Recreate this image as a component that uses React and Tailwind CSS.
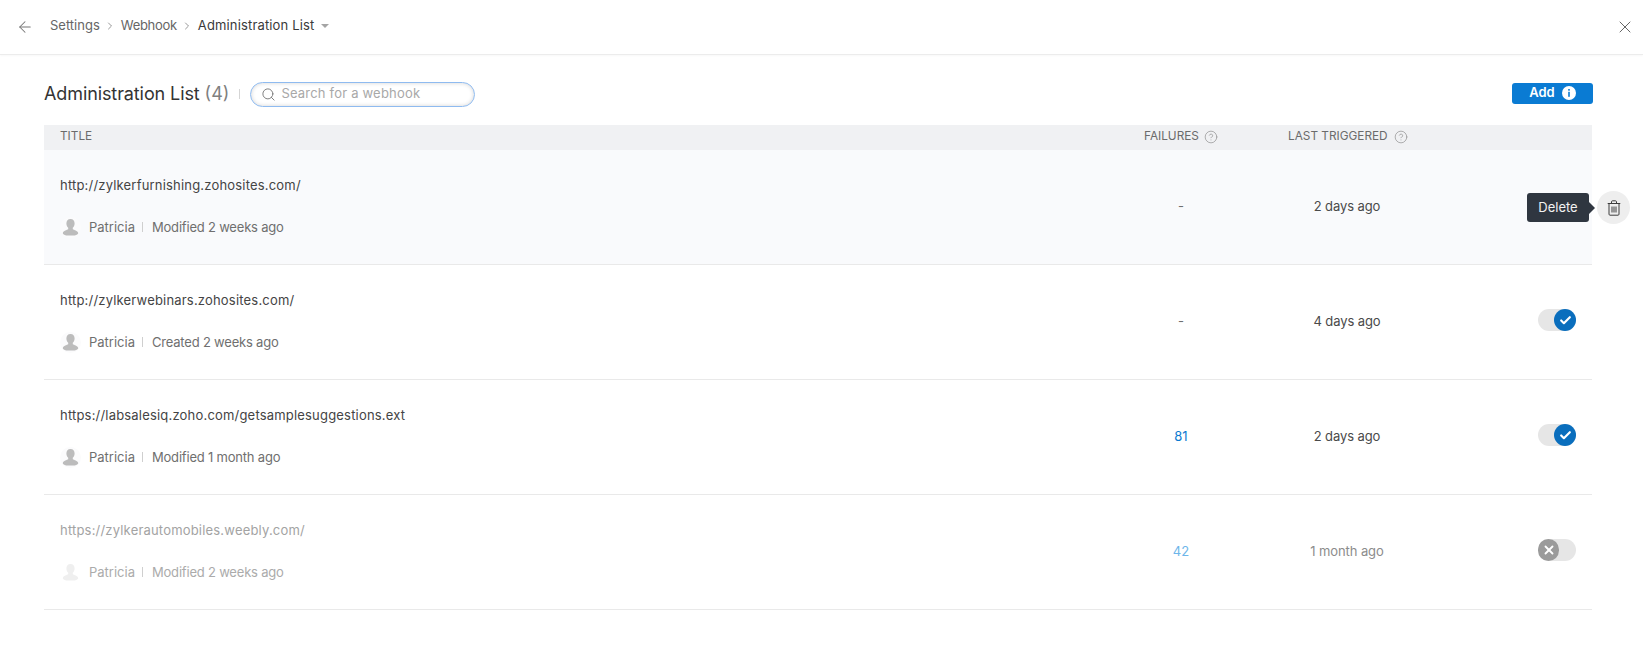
import { ArrowLeft, ChevronRight, Search, X, Check, CircleHelp } from "lucide-react";

const rows = [
  { url: "http://zylkerfurnishing.zohosites.com/", note: "Modified 2 weeks ago", failures: "-", last: "2 days ago", state: "hover" },
  { url: "http://zylkerwebinars.zohosites.com/", note: "Created 2 weeks ago", failures: "-", last: "4 days ago", state: "on" },
  { url: "https://labsalesiq.zoho.com/getsamplesuggestions.ext", note: "Modified 1 month ago", failures: "81", last: "2 days ago", state: "on" },
  { url: "https://zylkerautomobiles.weebly.com/", note: "Modified 2 weeks ago", failures: "42", last: "1 month ago", state: "off" },
];

const Avatar = ({ off }) => (
  <svg viewBox="0 0 22 22" className="w-[21px] h-[21px] shrink-0">
    <circle cx="11" cy="11" r="11" fill={off ? "#ffffff" : "#fbfbfc"} />
    <path
      d="M11 2c-2.800 0-4.300 2.100-4.300 4.700 0 1.900.8 3.500 1.900 4.500v1.600c-1.400.9-5 1.500-5.600 3.600-.3 1 .3 3.100 8 3.100s8.300-2.100 8-3.100c-.6-2.100-4.200-2.700-5.600-3.600v-1.600c1.100-1 1.900-2.600 1.900-4.500 0-2.600-1.500-4.700-4.300-4.700z"
      fill={off ? "#efefef" : "#bcbcbc"}
    />
  </svg>
);

const TrashIcon = () => (
  <svg viewBox="0 0 14 16" className="w-[14px] h-[16px] text-[#3d3d3d]" fill="none" stroke="currentColor" strokeWidth="1">
    <path d="M.7 3.500h12.600" />
    <path d="M4.500 3.300V1.800c0-.6.4-1 1-1h3c.6 0 1 .4 1 1v1.500" />
    <path d="M2 3.500v10.700c0 .6.4 1 1 1h8c.6 0 1-.4 1-1V3.500" />
    <path d="M5 6.500v6M7 6.500v6M9 6.500v6" />
  </svg>
);

const Toggle = ({ on }) => (
  <div className="w-[38px] h-[22px] rounded-full bg-[#e6e6e6] flex items-center">
    {on ? (
      <span className="ml-auto w-[22px] h-[22px] rounded-full bg-[#0a6ebd] flex items-center justify-center">
        <Check size={13} strokeWidth={4} className="text-white" />
      </span>
    ) : (
      <span className="w-[21px] h-[22px] rounded-full bg-[#9b9b9b] flex items-center justify-center">
        <X size={14} strokeWidth={3.200} className="text-white" />
      </span>
    )}
  </div>
);

const Row = ({ row }) => {
  const off = row.state === "off";
  const hover = row.state === "hover";
  return (
    <div className={`relative flex h-[115px] items-center border-b border-[#e9e9e9] ${hover ? "bg-[#f9fafc]" : ""}`}>
      <div className="flex-1 pl-4 pb-[1px]">
        <div className={`text-[13px] leading-[20px] tracking-[0.19px] ${off ? "text-[#a3a3a3]" : "text-[#444444]"}`}>{row.url}</div>
        <div className={`mt-[21px] flex items-center text-[13px] leading-[22px] ${off ? "text-[#ababab]" : "text-[#6f6f6f]"}`}>
          <Avatar off={off} />
          <span className="ml-[8px]">Patricia</span>
          <span className="ml-[7px] mr-[9px] h-[10px] w-px bg-[#cfcfcf]" />
          <span className="tracking-[-0.2px]">{row.note}</span>
        </div>
      </div>
      <div className="w-[144px] shrink-0">
        <div className={`w-[74px] text-center text-[13px] ${row.failures === "-" ? "text-[#6f6f6f]" : off ? "text-[#6db6ea]" : "text-[#0b7ad1]"}`}>{row.failures}</div>
      </div>
      <div className="w-[304px] shrink-0">
        <div className={`w-[118px] text-center text-[13px] tracking-[-0.1px] ${off ? "text-[#8c8c8c]" : "text-[#4a4a4a]"}`}>{row.last}</div>
      </div>
      {!hover && (
        <div className="absolute right-[16px] top-[44px]">
          <Toggle on={row.state === "on"} />
        </div>
      )}
      {hover && (
        <div className="absolute left-[1483px] top-[41px] flex items-center">
          <div className="relative h-[29px] w-[62px] rounded-[3px] bg-[#2f3640] flex items-center justify-center text-[13px] text-[#f2f2f2]">
            Delete
            <span className="absolute -right-[6px] top-1/2 -translate-y-1/2 border-y-[6px] border-l-[6px] border-y-transparent border-l-[#2f3640]" />
          </div>
          <div className="ml-[8px] w-[33px] h-[33px] rounded-full bg-[#eeeeee] flex items-center justify-center">
            <TrashIcon />
          </div>
        </div>
      )}
    </div>
  );
};

export default function App() {
  return (
    <div className="h-[664px] bg-white font-['Inter',sans-serif] overflow-hidden">
      <div className="flex h-[55px] items-center border-b border-[#ececec] shadow-[0_1px_2px_rgba(0,0,0,0.03)] pl-[16px] pr-[8px]">
        <ArrowLeft size={18} strokeWidth={1.400} className="text-[#777777]" />
        <div className="flex items-center pb-[2px]">
          <span className="ml-[16px] text-[13px] text-[#666666]">Settings</span>
          <ChevronRight size={12} strokeWidth={1.500} className="mx-[4.500px] text-[#777777]" />
          <span className="text-[13px] tracking-[-0.3px] text-[#666666]">Webhook</span>
          <ChevronRight size={12} strokeWidth={1.500} className="mx-[4.500px] text-[#777777]" />
          <span className="text-[13px] tracking-[0.15px] text-[#3a3a3a]">Administration List</span>
          <span className="ml-[7px] border-x-[4px] border-t-[4px] border-x-transparent border-t-[#a5a5a5]" />
        </div>
        <X size={20} strokeWidth={1.200} className="ml-auto text-[#666666]" />
      </div>

      <div className="mx-[44px] w-[1548px]">
        <div className="flex h-[70px] items-center pt-[8px]">
          <h1 className="pb-[2px] text-[18px] font-normal tracking-[-0.1px] text-[#333333]">Administration List</h1>
          <span className="ml-[5px] pb-[2px] text-[18px] text-[#808080]">(4)</span>
          <span className="ml-[10px] h-[10px] w-px bg-[#d5d5d5]" />
          <div className="ml-[10px] flex h-[25px] w-[225px] items-center rounded-full border border-[#8fbbf0] shadow-[inset_0_0_4px_rgba(0,0,0,0.18)] pl-[10px]">
            <Search size={15} strokeWidth={1.500} className="text-[#777777]" />
            <span className="ml-[5px] text-[13px] tracking-[0.2px] text-[#a8a8a8]">Search for a webhook</span>
          </div>
          <button className="ml-auto mb-[2px] mr-[-1px] flex h-[21px] w-[81px] items-center justify-center rounded-[3px] bg-[#0a7bd3] text-[13px] font-semibold text-white">
            Add
            <svg viewBox="0 0 14 14" className="ml-[7px] w-[14px] h-[14px]">
              <circle cx="7" cy="7" r="7" fill="#ffffff" />
              <rect x="6.200" y="3" width="1.600" height="1.700" fill="#0a7bd3" />
              <rect x="6.200" y="5.800" width="1.600" height="5" fill="#0a7bd3" />
            </svg>
          </button>
        </div>

        <div className="flex h-[25px] items-center bg-[#f0f1f3] pb-[1px] text-[11.800px] text-[#6b6b6b]">
          <div className="flex-1 pl-4">TITLE</div>
          <div className="flex w-[144px] shrink-0 items-center">
            FAILURES
            <CircleHelp size={14} strokeWidth={1.200} className="ml-[5px] text-[#8f8f8f]" />
          </div>
          <div className="flex w-[304px] shrink-0 items-center">
            LAST TRIGGERED
            <CircleHelp size={14} strokeWidth={1.200} className="ml-[6px] text-[#8f8f8f]" />
          </div>
        </div>

        {rows.map((row) => (
          <Row key={row.url} row={row} />
        ))}
      </div>
    </div>
  );
}
